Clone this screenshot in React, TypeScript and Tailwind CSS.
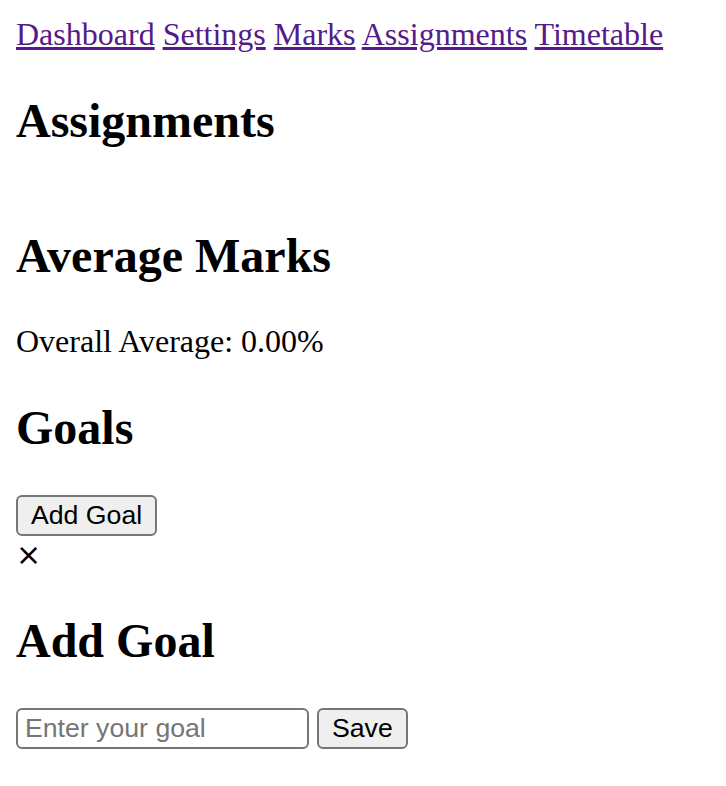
import React, { useState } from 'react';

const links = ['Dashboard', 'Settings', 'Marks', 'Assignments', 'Timetable'];

const btn =
  "h-[41px] px-[13px] bg-[#efefef] border-2 border-[#767676] rounded-[6px] font-['Liberation_Sans',Arial,sans-serif] text-[26.67px] leading-[normal] text-black align-baseline";

export default function App() {
  const [goal, setGoal] = useState('');

  return (
    <div className="min-h-screen bg-white p-4 font-['Liberation_Serif','Times_New_Roman',serif] text-[32px] leading-[normal] text-black">
      {/* Nav */}
      <nav>
        {links.map((l, i) => (
          <React.Fragment key={l}>
            <a href="#" className="text-[#551a8b] underline">
              {l}
            </a>
            {i < links.length - 1 && ' '}
          </React.Fragment>
        ))}
      </nav>

      {/* Assignments (empty list) */}
      <h2 className="mt-[40px] mb-[80px] text-[48px] font-bold">Assignments</h2>

      {/* Average marks */}
      <h2 className="my-[40px] text-[48px] font-bold">Average Marks</h2>
      <p className="my-[32px]">Overall Average: 0.00%</p>

      {/* Goals */}
      <h2 className="my-[40px] text-[48px] font-bold">Goals</h2>
      <div>
        <button className={btn}>Add Goal</button>
      </div>

      {/* Modal */}
      <div>
        <div className="h-[37px] flex items-center">
          <span className="cursor-pointer font-['DejaVu_Sans',sans-serif] text-[30px] leading-none">×</span>
        </div>
        <h2 className="my-[40px] text-[48px] font-bold">Add Goal</h2>
        <form onSubmit={(e) => e.preventDefault()}>
          <input
            value={goal}
            onChange={(e) => setGoal(e.target.value)}
            placeholder="Enter your goal"
            className="w-[293px] h-[41px] px-[7px] border-2 border-[#767676] rounded-[6px] font-['Liberation_Sans',Arial,sans-serif] text-[26.67px] leading-[normal] placeholder:text-[#757575] align-baseline"
          />{' '}
          <button type="submit" className={btn}>
            Save
          </button>
        </form>
      </div>
    </div>
  );
}
